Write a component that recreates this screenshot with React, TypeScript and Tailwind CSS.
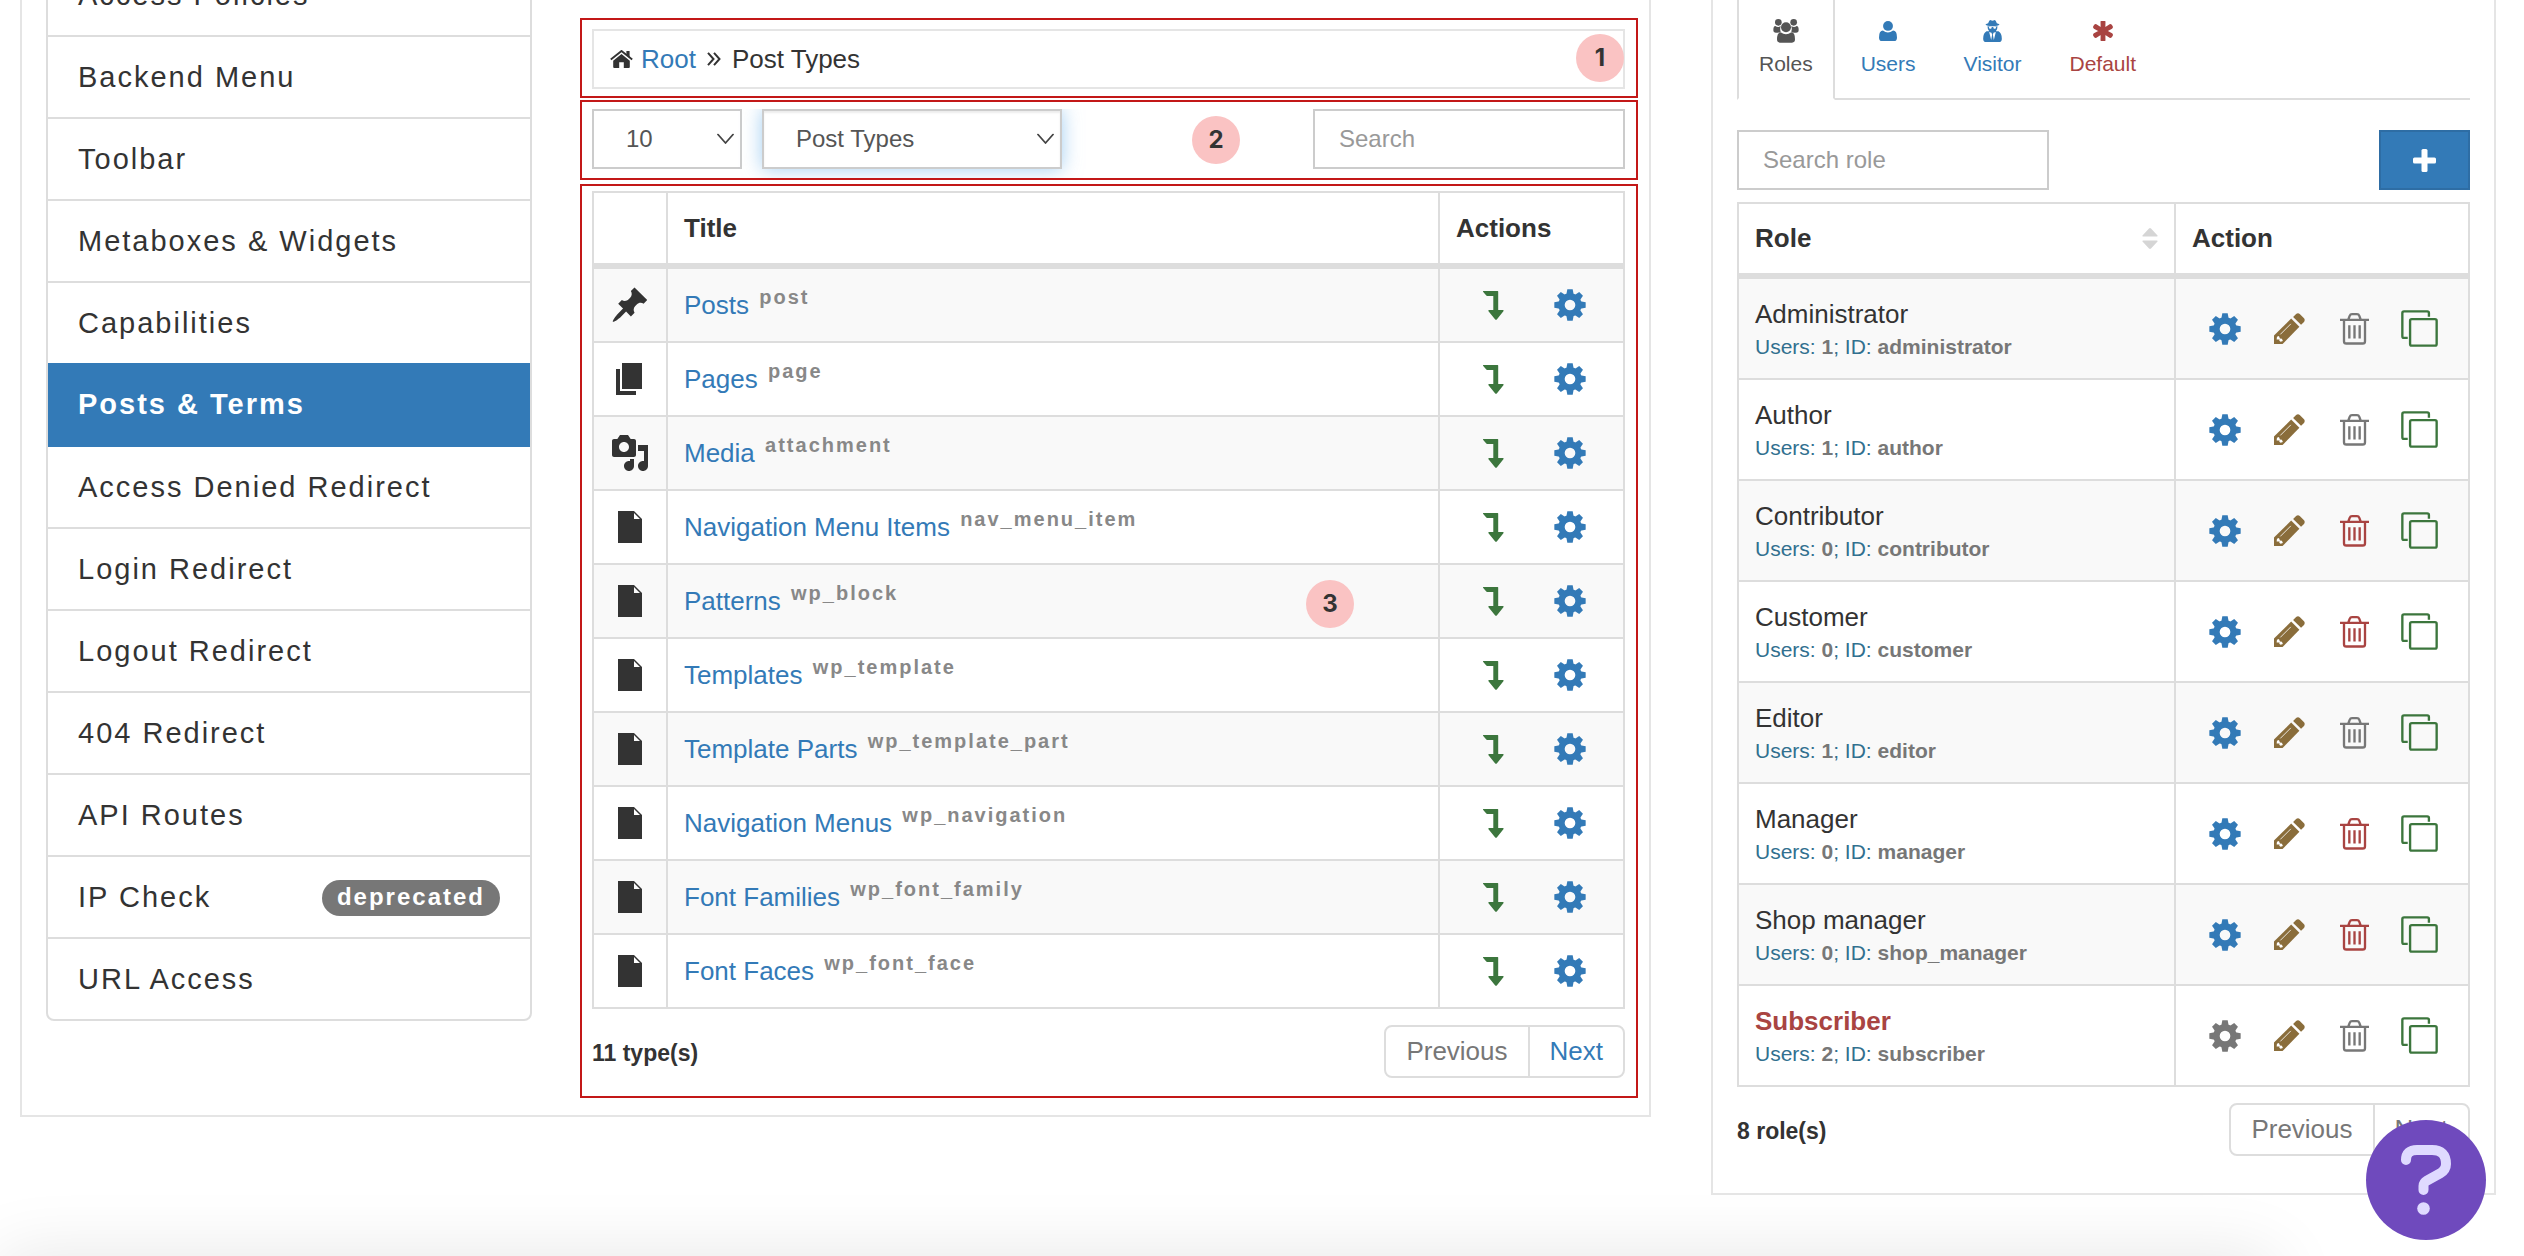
import React from 'react';
import { FaAsterisk } from 'react-icons/fa';

interface IconProps {
  className?: string;
}

interface PostType {
  title: string;
  slug: string;
  icon: string;
}

interface Role {
  name: string;
  id: string;
  users: number;
  current?: boolean;
}

const menuItems = [
  'Access Policies',
  'Backend Menu',
  'Toolbar',
  'Metaboxes & Widgets',
  'Capabilities',
  'Posts & Terms',
  'Access Denied Redirect',
  'Login Redirect',
  'Logout Redirect',
  '404 Redirect',
  'API Routes',
  'IP Check',
  'URL Access',
];

const typeIcons: { [key: string]: string } = {
  post: 'M10.44 3.02l1.82-1.82 6.36 6.35-1.83 1.82c-1.05-.68-2.48-.57-3.41.36l-.75.75c-.92.93-1.04 2.35-.35 3.41l-1.83 1.82-2.41-2.41-2.8 2.79c-.42.42-3.38 2.71-3.8 2.29s1.86-3.39 2.28-3.81l2.79-2.79L4.1 9.36l1.83-1.82c1.05.69 2.48.57 3.4-.36l.75-.75c.93-.92 1.05-2.35.36-3.41z',
  page: 'M6 15V2h10v13H6zm-1 1h8v2H3V5h2v11z',
  media:
    'M13 11V4c0-.55-.45-1-1-1h-1.67L9 1H5L3.67 3H2c-.55 0-1 .45-1 1v7c0 .55.45 1 1 1h10c.55 0 1-.45 1-1zM7 4.5c1.38 0 2.5 1.12 2.5 2.5S8.38 9.5 7 9.5 4.5 8.38 4.5 7 5.62 4.5 7 4.5zM14 6h5v10.5c0 1.38-1.12 2.5-2.5 2.5S14 17.88 14 16.5s1.12-2.5 2.5-2.5c.17 0 .34.02.5.05V9h-3V6zm-4 8.05V13h2v3.5c0 1.38-1.12 2.5-2.5 2.5S7 17.88 7 16.5 8.12 14 9.5 14c.17 0 .34.02.5.05z',
  file: 'M12 2l4 4v12H4V2h8zm0 4h3l-3-3v3z',
};

const postTypes: PostType[] = [
  { title: 'Posts', slug: 'post', icon: 'post' },
  { title: 'Pages', slug: 'page', icon: 'page' },
  { title: 'Media', slug: 'attachment', icon: 'media' },
  { title: 'Navigation Menu Items', slug: 'nav_menu_item', icon: 'file' },
  { title: 'Patterns', slug: 'wp_block', icon: 'file' },
  { title: 'Templates', slug: 'wp_template', icon: 'file' },
  { title: 'Template Parts', slug: 'wp_template_part', icon: 'file' },
  { title: 'Navigation Menus', slug: 'wp_navigation', icon: 'file' },
  { title: 'Font Families', slug: 'wp_font_family', icon: 'file' },
  { title: 'Font Faces', slug: 'wp_font_face', icon: 'file' },
];

const roles: Role[] = [
  { name: 'Administrator', id: 'administrator', users: 1 },
  { name: 'Author', id: 'author', users: 1 },
  { name: 'Contributor', id: 'contributor', users: 0 },
  { name: 'Customer', id: 'customer', users: 0 },
  { name: 'Editor', id: 'editor', users: 1 },
  { name: 'Manager', id: 'manager', users: 0 },
  { name: 'Shop manager', id: 'shop_manager', users: 0 },
  { name: 'Subscriber', id: 'subscriber', users: 2, current: true },
];

const CogIcon: React.FC<IconProps> = ({ className }) => (
  <svg viewBox="-48 -48 96 96" className={className} aria-hidden="true">
    <circle r="25.5" fill="none" stroke="currentColor" strokeWidth="19" />
    {[0, 45, 90, 135, 180, 225, 270, 315].map((angle) => (
      <path key={angle} d="M-8 -47H8L11 -31H-11Z" fill="currentColor" transform={`rotate(${angle})`} />
    ))}
  </svg>
);

const LevelDownIcon: React.FC<IconProps> = ({ className }) => (
  <svg viewBox="0 0 21 29" className={className} fill="currentColor" aria-hidden="true">
    <path d="M.3 0H14.6Q15.2 0 15.2 .6V19H20Q21 19.2 20.4 20.2L13.8 28.4Q13 29.3 12.2 28.4L5.5 20.2Q5 19.2 6 19H10.3V5H4Q3.6 5 3.3 4.6L0 .8Q-.2 .2 .3 0Z" />
  </svg>
);

const PencilIcon: React.FC<IconProps> = ({ className }) => (
  <svg viewBox="0 0 94 94" className={className} aria-hidden="true">
    <path d="M0 94V68L52 17L77 42L26 94Z" fill="currentColor" />
    <path d="M58 12L67 3Q73 -1 78 3L91 16Q95 21 91 27L82 36Z" fill="currentColor" />
    <path d="M19 65L51 33" stroke="#fff" strokeWidth="2.5" />
    <path d="M9 72L15 70L18 77L24 78L27 85L20 87L16 84L17 80L8 80Z" fill="#fff" />
  </svg>
);

const TrashIcon: React.FC<IconProps> = ({ className }) => (
  <svg viewBox="0 0 87 95" className={className} fill="none" stroke="currentColor" strokeWidth="7" aria-hidden="true">
    <path d="M0 20H87M25 19L29 8Q31 3 36 3H51Q56 3 58 8L62 19" />
    <path d="M12 20V84Q12 91 19 91H68Q75 91 75 84V20" />
    <path d="M28 36V76M43.500 36V76M59 36V76" strokeWidth="7" />
  </svg>
);

const CloneIcon: React.FC<IconProps> = ({ className }) => (
  <svg viewBox="0 0 110 110" className={className} fill="none" stroke="currentColor" strokeWidth="7" aria-hidden="true">
    <rect x="27" y="27" width="79" height="79" rx="5" />
    <path d="M20 83H9Q4 83 4 78V9Q4 4 9 4H78Q83 4 83 9V20" />
  </svg>
);

const HomeIcon: React.FC<IconProps> = ({ className }) => (
  <svg viewBox="0 0 23 18" className={className} aria-hidden="true">
    <path d="M11.500 4L19.800 10.800V17Q19.800 18 18.800 18H13.800V12.300H9.200V18H4.200Q3.200 18 3.200 17V10.800Z" fill="currentColor" />
    <path d="M.8 9.600L11.500 1L22.200 9.600" fill="none" stroke="currentColor" strokeWidth="1.900" />
    <path d="M16.400 1H19.600V8L16.400 5.300Z" fill="currentColor" />
  </svg>
);

const GroupIcon: React.FC<IconProps> = ({ className }) => (
  <svg viewBox="0 0 76 72" className={className} fill="currentColor" aria-hidden="true">
    <circle cx="15" cy="10" r="10" />
    <circle cx="61" cy="10" r="10" />
    <circle cx="38" cy="25" r="15" />
    <path d="M0 33Q0 21 6 21Q14 27 22 21Q19 30 22 38Q20 41 13 41H8Q0 41 0 33Z" />
    <path d="M76 33Q76 21 70 21Q62 27 54 21Q57 30 54 38Q56 41 63 41H68Q76 41 76 33Z" />
    <path d="M11 61Q11 40 22 40Q38 52 54 40Q65 40 65 61Q65 71 56 71H20Q11 71 11 61Z" />
  </svg>
);

const UserIcon: React.FC<IconProps> = ({ className }) => (
  <svg viewBox="0 0 55 61" className={className} fill="currentColor" aria-hidden="true">
    <circle cx="27.500" cy="15" r="15" />
    <path d="M0 50Q0 29 12 29Q27 41 43 29Q55 29 55 50Q55 61 46 61H9Q0 61 0 50Z" />
  </svg>
);

const SpyIcon: React.FC<IconProps> = ({ className }) => (
  <svg viewBox="0 0 56 66" className={className} aria-hidden="true">
    <g fill="currentColor">
      <path d="M15 10Q18 0 22 0Q28 4 34 0Q38 0 41 10Q49 12 49 14Q45 18 28 18Q11 18 7 14Q7 12 15 10Z" />
      <path d="M13 19Q28 22 43 19Q43 29 38 34L46 34Q56 40 56 56Q56 66 47 66H9Q0 66 0 56Q0 40 10 34L18 34Q13 29 13 19Z" />
    </g>
    <path d="M17 21H26L24 26H19ZM30 21H39L37 26H32Z" fill="#fff" />
    <path d="M18 36L25 38L27 44L24 60ZM38 36L31 38L29 44L32 60Z" fill="#fff" />
  </svg>
);

const ChevronIcon: React.FC = () => (
  <svg
    viewBox="0 0 17 11"
    className="pointer-events-none absolute top-1/2 right-2 h-[11px] w-[17px] -translate-y-1/2"
    fill="none"
    stroke="#444"
    strokeWidth="1.8"
    aria-hidden="true"
  >
    <path d="M1 1L8.500 9.500L16 1" strokeLinecap="round" strokeLinejoin="round" />
  </svg>
);

const Marker: React.FC<{ label: string; className: string }> = ({ label, className }) => (
  <span
    className={`absolute flex size-12 items-center justify-center rounded-full bg-[#fac3c3] font-['Inter',sans-serif] text-[24px] font-bold ${className}`}
  >
    {label}
  </span>
);

const Pagination: React.FC<{ nextDisabled?: boolean }> = ({ nextDisabled }) => (
  <div className="flex h-[53px] divide-x-2 divide-[#ddd] rounded-lg border-2 border-[#ddd] text-[26px]">
    <button className="px-5 text-[#777]">Previous</button>
    <button className={`px-5 ${nextDisabled ? 'text-[#777]' : 'text-[#337ab7]'}`}>Next</button>
  </div>
);

const Sidebar: React.FC = () => (
  <nav className="-mt-[47px] w-[486px] shrink-0 self-start overflow-hidden rounded-lg border-2 border-[#ddd] text-[29px] tracking-[2px]">
    {menuItems.map((item) => {
      const active = item === 'Posts & Terms';
      return (
        <a
          key={item}
          href="#"
          className={`-mx-[2px] flex items-center justify-between border-b-2 px-8 pt-[2px] last:h-20 last:border-b-0 ${
            active
              ? '-mt-[2px] h-[84px] border-[#337ab7] bg-[#337ab7] font-bold text-white'
              : 'h-[82px] border-[#ddd]'
          }`}
        >
          {item}
          {item === 'IP Check' && (
            <span className="h-9 rounded-[20px] bg-[#777] px-[15px] text-[24px] leading-[34px] font-bold text-white">
              deprecated
            </span>
          )}
        </a>
      );
    })}
  </nav>
);

const PostTypesTable: React.FC = () => (
  <table className="w-full table-fixed border-separate border-spacing-0 border-t-2 border-l-2 border-[#ddd] text-left text-[26px]">
    <thead>
      <tr>
        <th className="h-[76px] w-[74px] border-r-2 border-b-6 border-[#ddd]" />
        <th className="border-r-2 border-b-6 border-[#ddd] px-4">Title</th>
        <th className="w-[185px] border-r-2 border-b-6 border-[#ddd] px-4">Actions</th>
      </tr>
    </thead>
    <tbody>
      {postTypes.map((type) => (
        <tr key={type.slug} className="odd:bg-[#f9f9f9]">
          <td className="h-[74px] border-r-2 border-b-2 border-[#ddd]">
            <svg viewBox="0 0 20 20" className="mx-auto size-10" fill="#333" aria-hidden="true">
              <path d={typeIcons[type.icon]} />
            </svg>
          </td>
          <td className="border-r-2 border-b-2 border-[#ddd] px-4">
            <a href="#" className="text-[#337ab7]">
              {type.title}
            </a>{' '}
            <sup className="ml-[3px] text-[20px] font-bold tracking-[2px] text-[#888]">{type.slug}</sup>
          </td>
          <td className="border-r-2 border-b-2 border-[#ddd]">
            <div className="flex items-center justify-center gap-11">
              <button aria-label="Drill-down" className="flex w-8 justify-center text-[#3c763d]">
                <LevelDownIcon className="h-[29px] w-[21px]" />
              </button>
              <button aria-label="Manage access" className="text-[#337ab7]">
                <CogIcon className="size-8" />
              </button>
            </div>
          </td>
        </tr>
      ))}
    </tbody>
  </table>
);

const RolesTable: React.FC = () => (
  <table className="mt-3 w-full table-fixed border-separate border-spacing-0 border-t-2 border-l-2 border-[#ddd] text-left text-[26px]">
    <thead>
      <tr>
        <th className="h-[75px] border-r-2 border-b-6 border-[#ddd] px-4">
          <div className="flex items-center justify-between">
            Role
            <svg viewBox="0 0 16 21" className="h-[21px] w-4" fill="#d5d5d5" aria-hidden="true">
              <path d="M7 .5Q8 -.4 9 .5L15.500 7.500Q16 8.500 15 8.500H1Q0 8.500 .5 7.500ZM7 20.500Q8 21.400 9 20.500L15.500 13.500Q16 12.500 15 12.500H1Q0 12.500 .5 13.500Z" />
            </svg>
          </div>
        </th>
        <th className="w-[294px] border-r-2 border-b-6 border-[#ddd] px-4">Action</th>
      </tr>
    </thead>
    <tbody>
      {roles.map((role) => (
        <tr key={role.id} className="odd:bg-[#f9f9f9]">
          <td className="h-[101px] border-r-2 border-b-2 border-[#ddd] px-4">
            <p className={`leading-[36px] ${role.current ? 'font-bold text-[#a94442]' : ''}`}>{role.name}</p>
            <p className="text-[21px] leading-[30px] text-[#31708f]">
              Users: <b className="text-[#777]">{role.users}</b>; ID: <b className="text-[#777]">{role.id}</b>
            </p>
          </td>
          <td className="border-r-2 border-b-2 border-[#ddd]">
            <div className="flex items-center justify-center gap-7">
              <button
                aria-label="Manage role"
                className={`flex w-[37px] justify-center ${role.current ? 'text-[#777]' : 'text-[#337ab7]'}`}
              >
                <CogIcon className="size-8" />
              </button>
              <button aria-label="Edit role" className="flex w-[37px] justify-center text-[#8a6d3b]">
                <PencilIcon className="size-[31px]" />
              </button>
              <button
                aria-label="Delete role"
                className={`flex w-[37px] justify-center ${role.users > 0 ? 'text-[#777]' : 'text-[#a94442]'}`}
              >
                <TrashIcon className="h-8 w-[29px]" />
              </button>
              <button aria-label="Clone role" className="text-[#3c763d]">
                <CloneIcon className="size-[37px]" />
              </button>
            </div>
          </td>
        </tr>
      ))}
    </tbody>
  </table>
);

const SubjectTabs: React.FC = () => {
  const tabs = [
    { label: 'Roles', icon: <GroupIcon className="h-6 w-[26px]" />, color: 'text-[#555]' },
    { label: 'Users', icon: <UserIcon className="h-5 w-[18px]" />, color: 'text-[#337ab7]' },
    { label: 'Visitor', icon: <SpyIcon className="h-[22px] w-[19px]" />, color: 'text-[#337ab7]' },
    { label: 'Default', icon: <FaAsterisk className="size-5" stroke="currentColor" strokeWidth="40" />, color: 'text-[#a94442]' },
  ];

  return (
    <ul className="flex gap-1 border-b-2 border-[#ddd]">
      {tabs.map((tab, index) => (
        <li
          key={tab.label}
          className={`-mb-[2px] border-x-2 border-b-2 ${
            index === 0 ? 'border-x-[#ddd] border-b-white' : 'border-transparent'
          }`}
        >
          <a href="#" className={`flex flex-col items-center gap-[6px] px-5 pt-[19px] pb-[19px] text-[21px] leading-[30px] ${tab.color}`}>
            <span className="flex h-6 items-center">{tab.icon}</span>
            {tab.label}
          </a>
        </li>
      ))}
    </ul>
  );
};

const App: React.FC = () => {
  return (
    <div className="relative flex min-h-screen items-start gap-[60px] overflow-hidden bg-white pr-7 pb-10 pl-5 font-['Liberation_Sans',Arial,sans-serif] text-[#333]">
      <main className="flex flex-1 gap-12 border-x-2 border-b-2 border-[#e5e5e5] pr-[11px] pb-[17px] pl-6">
        <Sidebar />

        <div className="min-w-0 flex-1 pt-[18px]">
          <section className="relative border-2 border-[#c31818] pt-[9px] pr-[11px] pb-[7px] pl-[10px]">
            <div className="flex h-[60px] items-center border-2 border-[#e5e5e5] px-4 text-[26px]">
              <HomeIcon className="mr-2 h-[18px] w-[23px]" />
              <a href="#" className="text-[#337ab7]">
                Root
              </a>
              <svg viewBox="0 0 14 14" className="mx-[11px] size-[14px]" fill="none" stroke="#333" strokeWidth="2" aria-hidden="true">
                <path d="M1 .8L6.500 7L1 13.200M7 .8L12.500 7L7 13.200" />
              </svg>
              Post Types
            </div>
            <Marker label="1" className="top-[14px] right-3" />
          </section>

          <section className="relative mt-[2px] flex border-2 border-[#c31818] pt-[7px] pr-[11px] pb-[9px] pl-[10px] text-[24px] text-[#555]">
            <div className="relative w-[150px]">
              <select aria-label="Rows per page" className="h-[60px] w-full appearance-none border-2 border-[#ccc] bg-white pl-8">
                <option>10</option>
              </select>
              <ChevronIcon />
            </div>
            <div className="relative ml-5 w-[300px] [clip-path:inset(0_-24px_-9px_-24px)]">
              <select
                aria-label="Resource type"
                className="h-[60px] w-full appearance-none border-2 border-[#ccc] bg-white pl-8 shadow-[inset_0_2px_2px_rgba(0,0,0,0.075),0_0_18px_rgba(102,175,233,0.6)]"
              >
                <option>Post Types</option>
              </select>
              <ChevronIcon />
            </div>
            <input
              type="text"
              aria-label="Search"
              placeholder="Search"
              className="ml-auto h-[60px] w-[312px] border-2 border-[#ccc] px-6 placeholder:text-[#999]"
            />
            <Marker label="2" className="top-[14px] right-[396px] text-[#333]" />
          </section>

          <section className="relative mt-1 border-2 border-[#c31818] pt-[5px] pr-[11px] pb-[18px] pl-[10px]">
            <PostTypesTable />
            <div className="mt-4 flex items-center justify-between">
              <b className="pt-[3px] text-[23px]">11 type(s)</b>
              <Pagination />
            </div>
            <Marker label="3" className="top-[394px] right-[282px]" />
          </section>
        </div>
      </main>

      <aside className="w-[785px] shrink-0 border-x-2 border-b-2 border-[#e5e5e5] px-6 pb-[37px]">
        <SubjectTabs />
        <div className="mt-[30px] flex justify-between">
          <input
            type="text"
            aria-label="Search role"
            placeholder="Search role"
            className="h-[60px] w-[312px] border-2 border-[#ccc] px-6 text-[24px] placeholder:text-[#999]"
          />
          <button aria-label="Add role" className="flex h-[60px] w-[91px] items-center justify-center border-2 border-[#2e6da4] bg-[#337ab7]">
            <svg viewBox="0 0 23 23" className="size-[23px]" fill="#fff" aria-hidden="true">
              <rect x="8.500" width="6" height="23" rx="1.500" />
              <rect y="8.500" width="23" height="6" rx="1.500" />
            </svg>
          </button>
        </div>
        <RolesTable />
        <div className="mt-4 flex items-center justify-between">
          <b className="pt-[3px] text-[23px]">8 role(s)</b>
          <Pagination nextDisabled />
        </div>
      </aside>

      <div className="absolute top-full right-[250px] left-0 h-20 shadow-[0_0_70px_rgba(0,0,0,0.1)]" />

      <button aria-label="Help" className="fixed right-[38px] bottom-4 size-[120px] rounded-full bg-[#6f4abd]">
        <svg viewBox="0 0 120 120" className="size-full" aria-hidden="true">
          <path
            d="M40 40Q40 30 51 30H66Q80 30 80 44Q80 50 74 53.500L61 60.500Q57.500 62.500 57.500 66V70"
            fill="none"
            stroke="#dfdaff"
            strokeWidth="10"
            strokeLinecap="round"
          />
          <circle cx="57.500" cy="88.500" r="6.300" fill="#dfdaff" />
        </svg>
      </button>
    </div>
  );
};

export default App;
